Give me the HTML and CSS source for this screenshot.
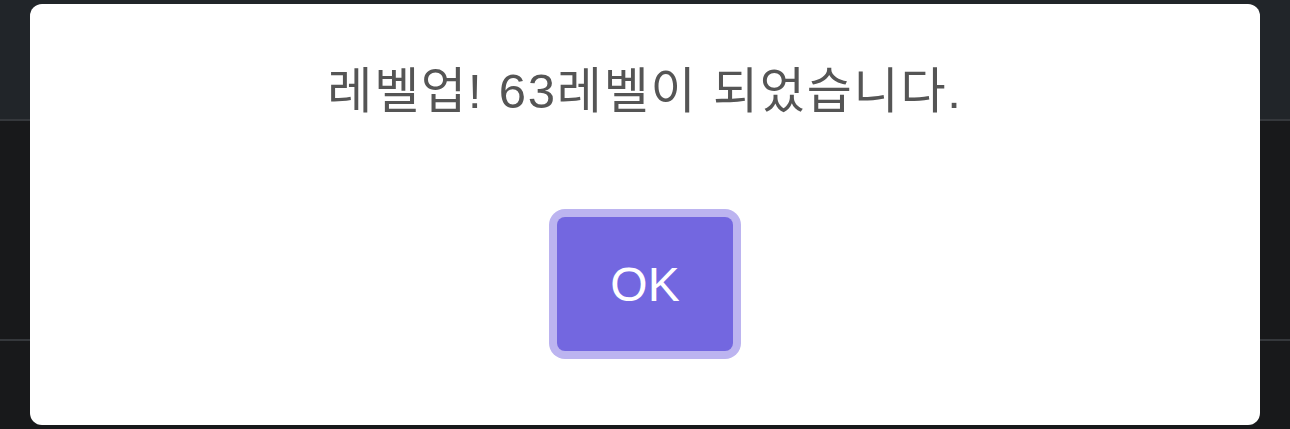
FILE: index.html
```html
<!DOCTYPE html>
<html lang="ko">
<head>
<meta charset="utf-8">
<title>레벨업</title>
<link rel="stylesheet" href="styles.css">
</head>
<body>
  <div class="app">
    <header class="topbar"></header>
    <main class="content">
      <section class="panel"></section>
      <section class="panel-rest"></section>
    </main>
  </div>

  <div class="overlay">
    <div class="dialog" role="dialog" aria-modal="true">
      <p class="dialog-title">레벨업! 63레벨이 되었습니다.</p>
      <button class="dialog-ok" type="button">OK</button>
    </div>
  </div>
</body>
</html>
```

FILE: styles.css
```css
* {
  box-sizing: border-box;
}

html, body {
  margin: 0;
  padding: 0;
  height: 100%;
}

body {
  background: #18191b;
  font-family: "Liberation Sans", "Noto Sans CJK KR", sans-serif;
  overflow: hidden;
}

.app {
  display: flex;
  flex-direction: column;
  height: 100%;
}

.topbar {
  height: 121px;
  background: #212529;
  border-bottom: 2px solid #35383c;
}

.content {
  flex: 1;
  display: flex;
  flex-direction: column;
}

.panel {
  height: 220px;
  background: #18191b;
  border-bottom: 2px solid #35383c;
}

.panel-rest {
  flex: 1;
  background: #18191b;
}

/* modal layer on top of the page */
.overlay {
  position: fixed;
  inset: 0;
  display: flex;
  justify-content: center;
  padding: 4px 30px;
}

.dialog {
  width: 1230px;
  height: 421px;
  background: #ffffff;
  border-radius: 12px;
  display: flex;
  flex-direction: column;
  align-items: center;
  padding-top: 59px;
}

.dialog-title {
  margin: 0;
  font-size: 49px;
  line-height: 56px;
  letter-spacing: 1.8px;
  color: #555555;
  font-weight: 400;
}

.dialog-ok {
  margin-top: 98px;
  width: 176px;
  height: 134px;
  border: none;
  border-radius: 8px;
  background: #7367e0;
  color: #ffffff;
  font-family: "Liberation Sans", sans-serif;
  font-size: 48px;
  box-shadow: 0 0 0 8px #bcb4f0;
  cursor: pointer;
}
```
